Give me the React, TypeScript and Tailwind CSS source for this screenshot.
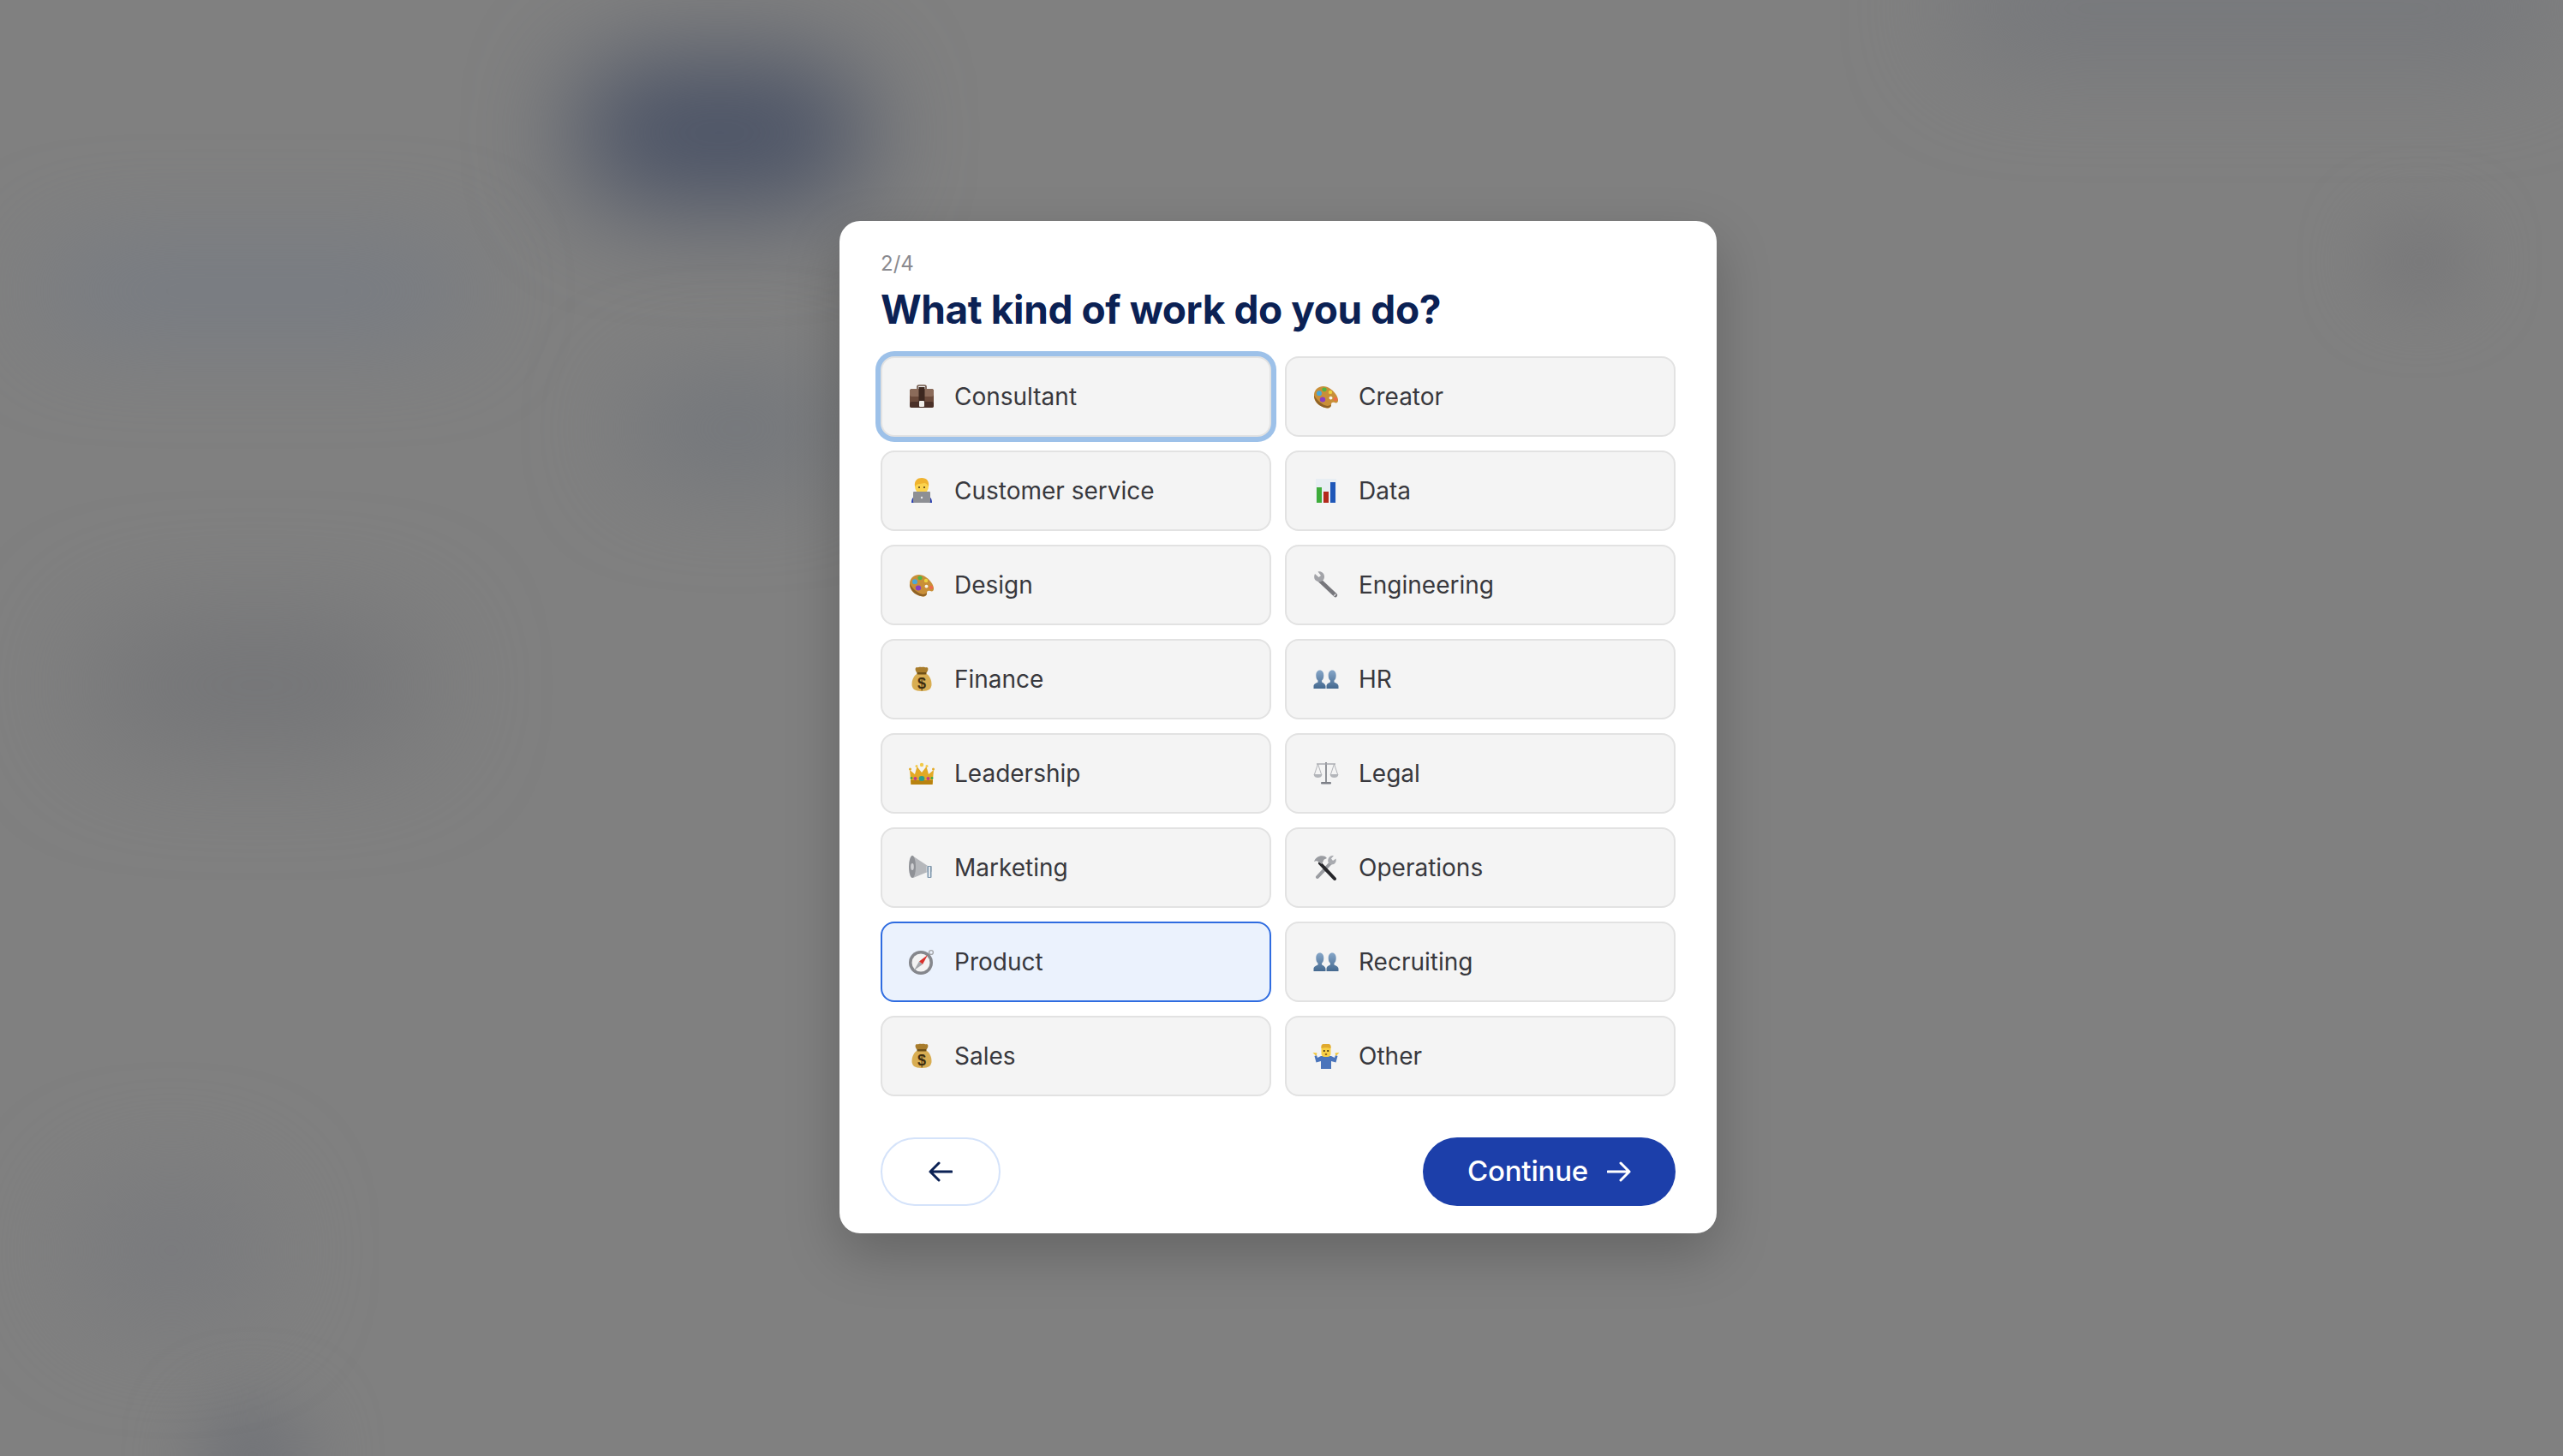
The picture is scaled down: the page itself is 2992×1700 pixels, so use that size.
import React from 'react';

type Role = { label: string; icon: React.ReactNode; selected?: boolean; focused?: boolean };

const Svg: React.FC<{ children: React.ReactNode }> = ({ children }) => (
  <svg viewBox="0 0 32 32" className="w-8 h-8 shrink-0">{children}</svg>
);

const Briefcase = () => (
  <Svg>
    <path d="M11 8V4.500C11 3.500 12 3 13 3h6c1 0 2 .5 2 1.500V8" fill="none" stroke="#6d5446" strokeWidth="1.600" />
    <rect x="2" y="7" width="28" height="22" rx="2.500" fill="#6b4a3b" />
    <rect x="2" y="7" width="28" height="9" rx="2.500" fill="#8b6b5a" />
    <rect x="2" y="22" width="28" height="7" rx="2.500" fill="#4a3028" />
    <rect x="12.500" y="5" width="7" height="18" fill="#3d2820" />
    <rect x="13" y="21" width="6" height="7" rx="1" fill="#f0eeea" />
  </Svg>
);

const Technologist = () => (
  <Svg>
    <path d="M4 30c0-6 3-9 12-9s12 3 12 9z" fill="#2a3fb0" />
    <ellipse cx="16" cy="11" rx="8" ry="9" fill="#fbd34d" />
    <path d="M8 11C7 4 11 1 16 1c6 0 9 4 8 10-2-3-3-4-5-4-3 1-8 0-11 4z" fill="#f0b32e" />
    <circle cx="13" cy="12" r="1" fill="#4a3418" />
    <circle cx="19" cy="12" r="1" fill="#4a3418" />
    <rect x="6" y="17" width="20" height="13" rx="1" fill="#8d8f94" />
    <circle cx="16" cy="24" r="1.200" fill="#e8e8e8" />
  </Svg>
);

const Palette = () => (
  <Svg>
    <g transform="translate(0 -2.500) scale(1 1.220)">
      <path d="M2 13C3 7 10 4 17 6c6 2 12 7 13 12 .5 3-2 4-4 3-2-.5-4-.5-4 2 0 3-3 4-6 3C8 25 1 20 2 13z" fill="#c98f38" />
      <path d="M2 14c0 6 6 11 14 12 3 .5 6-.5 6-3-4 2-8 1-11-1-4-2-7-5-9-8z" fill="#8f6226" />
      <ellipse cx="8" cy="12" rx="3" ry="2.400" fill="#4aa8d8" />
      <ellipse cx="14" cy="8.500" rx="2.600" ry="2" fill="#4fb548" />
      <ellipse cx="21" cy="11" rx="2.200" ry="1.800" fill="#ecd23e" />
      <ellipse cx="12" cy="18" rx="3.200" ry="2.400" fill="#8a3fc0" />
      <ellipse cx="27" cy="17.500" rx="2.200" ry="1.800" fill="#ef6a4a" />
      <ellipse cx="21.500" cy="16.500" rx="2" ry="1.500" fill="#f7f3ea" />
    </g>
  </Svg>
);

const BarChart = () => (
  <Svg>
    <rect x="4" y="2" width="24" height="28" fill="#e8eef3" />
    <rect x="5" y="12" width="6" height="18" fill="#3eac3a" />
    <rect x="13" y="17" width="6" height="13" fill="#b42a1c" />
    <rect x="21" y="6" width="6" height="24" fill="#1f57b8" />
  </Svg>
);

const Wrench = () => (
  <Svg>
    <path d="M9 11 27 28" stroke="#77777c" strokeWidth="4.500" strokeLinecap="round" />
    <path d="M3 3l4.500 4 2.500-2-3.500-4.500c4-1 8 2 7.500 6.500-.2 1.500-.7 2.500-1.500 3.500-2 2-5.500 2.500-8 .5C2 9.500 1.500 6 3 3z" fill="#a2a3a8" />
    <path d="M25.500 28.500l1.500-1.500" stroke="#d9d9dc" strokeWidth="1.500" strokeLinecap="round" />
  </Svg>
);

const MoneyBag = () => (
  <Svg>
    <path d="M11 9C8 6 8 3 10 2c2 1 3-1 6 0 3-1 4 1 6 0 2 1 2 4-1 7z" fill="#a87c2c" />
    <path d="M11.500 9h9c5 3 7 8 7 13 0 5-3 8-11.500 8S4.500 27 4.500 22c0-5 2-10 7-13z" fill="#d8ad52" />
    <rect x="10.500" y="8" width="11" height="2.400" rx="1" fill="#6e5018" />
    <text x="16" y="27" textAnchor="middle" fontSize="18" fontWeight="700" fontFamily="Liberation Sans, sans-serif" fill="#3e2d10">$</text>
  </Svg>
);

const People = () => (
  <Svg>
    <defs>
      <linearGradient id="bust" x1="0" y1="0" x2="0" y2="1">
        <stop offset="0" stopColor="#86a6c8" />
        <stop offset="1" stopColor="#45698f" />
      </linearGradient>
    </defs>
    <path d="M1.500 27v-3c0-2.500 3-3.500 5-4.500v-2c-1.500-1-2.200-3-2.200-6C4.300 8 6 5.500 8.800 5.500s4.500 2.500 4.500 6c0 3-.7 5-2.200 6v2c2 1 4 2 4.400 4.500V27z" fill="url(#bust)" />
    <path d="M16.500 27v-3.500c.4-2.500 2.400-3 4.400-4v-2c-1.500-1-2.200-3-2.200-6 0-3.500 1.700-6 4.500-6s4.500 2.500 4.500 6c0 3-.7 5-2.200 6v2c2 1 5 2 5 4.500v3z" fill="url(#bust)" />
  </Svg>
);

const Scales = () => (
  <Svg>
    <path d="M16 3v23" stroke="#85888e" strokeWidth="1.800" />
    <path d="M5 5h22" stroke="#a5a7ac" strokeWidth="1.400" />
    <path d="M6.500 5 2.500 17M6.500 5l4 12M25.500 5l-4 12M25.500 5l4 12" stroke="#a9abb0" strokeWidth="0.900" fill="none" />
    <path d="M1.500 17h10c-.5 3-2.500 4-5 4s-4.500-1-5-4zM20.500 17h10c-.5 3-2.500 4-5 4s-4.500-1-5-4z" fill="#b3b5ba" />
    <rect x="10" y="26" width="12" height="2.400" rx="1" fill="#7d8087" />
  </Svg>
);

const Crown = () => (
  <Svg>
    <path d="M2 12l6 5 2.500-9L16 15l5.500-7L24 17l6-5-1.500 17h-25z" fill="#e3a925" />
    <path d="M3 24h26l-.5 5h-25z" fill="#b8820f" />
    <circle cx="16" cy="6" r="2.200" fill="#f2ca4a" />
    <circle cx="10" cy="7.500" r="1.500" fill="#f2ca4a" />
    <circle cx="22" cy="7.500" r="1.500" fill="#f2ca4a" />
    <circle cx="2.500" cy="11" r="1.500" fill="#e3a925" />
    <circle cx="29.500" cy="11" r="1.500" fill="#e3a925" />
    <ellipse cx="16" cy="22" rx="3.400" ry="3" fill="#2f9e8a" />
    <circle cx="8.500" cy="22" r="2" fill="#c23a8a" />
    <circle cx="23.500" cy="22" r="2" fill="#c23a8a" />
    <circle cx="4" cy="21.500" r="1.400" fill="#3aa84a" />
    <circle cx="28" cy="21.500" r="1.400" fill="#3aa84a" />
  </Svg>
);

const Megaphone = () => (
  <Svg>
    <path d="M5 2 23 14v7L6 28C2 24 1 7 5 2z" fill="#b5b7bb" />
    <ellipse cx="5" cy="15" rx="4" ry="13" fill="#8f9196" />
    <ellipse cx="5" cy="15" rx="1.800" ry="4" fill="#d0d1d4" />
    <rect x="21" y="14" width="7" height="7" rx="1" fill="#c9cbcf" />
    <rect x="22.500" y="14" width="5" height="14" rx="1" fill="#7e97ad" />
    <rect x="24" y="15" width="2" height="12" fill="#e4e9ee" />
  </Svg>
);

const Compass = () => (
  <Svg>
    <circle cx="27" cy="5" r="2.400" fill="none" stroke="#a5a7ab" strokeWidth="1.400" />
    <circle cx="15" cy="17" r="14" fill="#85878c" />
    <circle cx="15" cy="17" r="10.500" fill="#f3f3f3" />
    <path d="M23 8 17 19 13 15.500z" fill="#d9302a" />
    <path d="M7 26l6-10.500 4 3.500z" fill="#a5a7ab" />
  </Svg>
);

const Tools = () => (
  <Svg>
    <path d="M6 27 22 10" stroke="#9a9ca1" strokeWidth="4" strokeLinecap="round" />
    <path d="M25 2l-3 3.500 2 2.500 3.500-2.500c1 3.500-1 7-5 7-3 0-5-3-4-6.500C19.500 3 22 1.500 25 2z" fill="#a9abb0" />
    <path d="M9 11l17 18" stroke="#26262a" strokeWidth="4" strokeLinecap="round" />
    <path d="M2 9c2-6 8-8 13-6l2 2-2 1c-1 0-2 1-2 2l-2 4-3-2c-2-2-4-2-6-1z" fill="#9a9ca1" />
  </Svg>
);

const Shrug = () => (
  <Svg>
    <path d="M10 16h12l4 2 1-3 2.500 1-2 7.500-5.500-1.500v9H10v-9l-5.500 1.500-2-7.500 2.500-1 1 3z" fill="#4a74bb" />
    <rect x="10.500" y="2" width="11" height="15" rx="4" fill="#f7cf44" />
    <path d="M10.500 7V4.500C10.500 3 11.500 2 13 2h6c1.500 0 2.500 1 2.500 2.500V7c-3-1-8-1-11 0z" fill="#e0a92e" />
    <circle cx="13.800" cy="10" r="1.100" fill="#3f2c10" />
    <circle cx="18.200" cy="10" r="1.100" fill="#3f2c10" />
    <ellipse cx="16" cy="14" rx="1.300" ry="1" fill="#8a5a1c" />
    <path d="M.5 12l5 .5-1 3.500zM31.500 12l-5 .5 1 3.500z" fill="#f2c535" />
  </Svg>
);

const roles: Role[] = [
  { label: 'Consultant', icon: <Briefcase />, focused: true },
  { label: 'Creator', icon: <Palette /> },
  { label: 'Customer service', icon: <Technologist /> },
  { label: 'Data', icon: <BarChart /> },
  { label: 'Design', icon: <Palette /> },
  { label: 'Engineering', icon: <Wrench /> },
  { label: 'Finance', icon: <MoneyBag /> },
  { label: 'HR', icon: <People /> },
  { label: 'Leadership', icon: <Crown /> },
  { label: 'Legal', icon: <Scales /> },
  { label: 'Marketing', icon: <Megaphone /> },
  { label: 'Operations', icon: <Tools /> },
  { label: 'Product', icon: <Compass />, selected: true },
  { label: 'Recruiting', icon: <People /> },
  { label: 'Sales', icon: <MoneyBag /> },
  { label: 'Other', icon: <Shrug /> },
];

const RoleCard: React.FC<{ role: Role }> = ({ role }) => (
  <button
    className={`h-[94px] flex items-center gap-[22px] pl-[30px] rounded-2xl border-2 text-left ${
      role.selected ? 'bg-[#ebf2fd] border-[#2f6ce0]' : 'bg-[#f4f4f4] border-[#e2e2e2]'
    } ${role.focused ? 'ring-[6px] ring-[#9dc1e9]' : ''}`}
  >
    {role.icon}
    <span className="text-[28px] leading-none text-[#38383d]">{role.label}</span>
  </button>
);

export default function App() {
  return (
    <div className="relative h-screen w-full overflow-hidden bg-[#808080] flex items-center justify-center pr-2 pb-[3px] font-['Inter',sans-serif]">
      {/* blurred page behind the dialog */}
      <div className="absolute left-[670px] top-[70px] w-[340px] h-[170px] rounded-full bg-[#4a5265] blur-[60px]" />
      <div className="absolute left-[60px] top-[300px] w-[480px] h-[80px] rounded-full bg-[#747a84] blur-[60px]" />
      <div className="absolute left-[110px] top-[740px] w-[380px] h-[120px] rounded-full bg-[#717275] blur-[70px]" />
      <div className="absolute left-[740px] top-[450px] w-[240px] h-[100px] rounded-full bg-[#70747a] blur-[60px]" />
      <div className="absolute left-[230px] top-[1640px] w-[130px] h-[120px] rounded-full bg-[#707277] blur-[40px]" />
      <div className="absolute left-[90px] top-[1380px] w-[220px] h-[160px] rounded-full bg-[#797a7d] blur-[60px]" />
      <div className="absolute left-[2280px] top-[-50px] w-[700px] h-[120px] rounded-full bg-[#75777b] blur-[60px]" />
      <div className="absolute left-[2770px] top-[260px] w-[110px] h-[90px] rounded-full bg-[#767678] blur-[40px]" />

      <div className="relative w-[1024px] h-[1182px] bg-white rounded-3xl px-12 pt-[34px] shadow-[0_24px_64px_rgba(0,0,0,0.22)]">
        <p className="text-[24px] leading-[32px] text-[#8a8a8f]">2/4</p>
        <h1 className="mt-[8px] text-[46px] leading-[58px] font-bold text-[#0b2154] tracking-[-0.4px]">
          What kind of work do you do?
        </h1>
        <div className="mt-[26px] grid grid-cols-2 gap-4">
          {roles.map((role) => (
            <RoleCard key={role.label} role={role} />
          ))}
        </div>
        <div className="mt-12 flex items-center justify-between">
          <button className="w-[140px] h-20 rounded-full border-2 border-[#d5e3fa] bg-white flex items-center justify-center">
            <svg viewBox="0 0 28 24" className="w-7 h-6" fill="none" stroke="#0b2154" strokeWidth="3" strokeLinecap="round" strokeLinejoin="round">
              <path d="M27 12H2M12 2 2 12l10 10" />
            </svg>
          </button>
          <button className="w-[295px] h-20 rounded-full bg-[#1c3faa] text-white flex items-center justify-center gap-[22px] text-[33px] font-medium tracking-[-0.2px]">
            Continue
            <svg viewBox="0 0 28 24" className="w-7 h-6" fill="none" stroke="#ffffff" strokeWidth="3" strokeLinecap="round" strokeLinejoin="round">
              <path d="M1 12h25M16 2l10 10-10 10" />
            </svg>
          </button>
        </div>
      </div>
    </div>
  );
}
